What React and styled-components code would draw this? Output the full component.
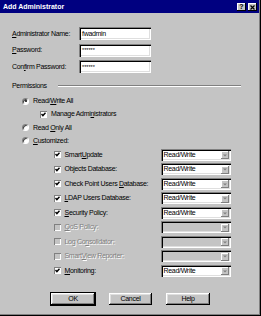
import React from 'react';
import styled, { createGlobalStyle } from 'styled-components';

const Global = createGlobalStyle`
  html, body { margin: 0; padding: 0; background: #c0c0c0; }
  body { font-family: "Liberation Sans", Arial, sans-serif; font-size: 7px; }
`;

const Window = styled.div`
  width: 261px;
  height: 316px;
  box-sizing: border-box;
  background: #c4c4c4;
  border-right: 1px solid #000;
  border-bottom: 1px solid #000;
  font-family: "Liberation Sans", Arial, sans-serif;
  font-size: 7px;
  letter-spacing: -0.3px;
  color: #000;
`;

const Frame = styled.div`
  height: 100%;
  box-sizing: border-box;
  border-right: 1px solid #808080;
  border-bottom: 1px solid #808080;
  display: flex;
  flex-direction: column;
`;

const TitleBar = styled.div`
  height: 13px;
  flex-shrink: 0;
  background: #000080;
  color: #fff;
  display: flex;
  align-items: center;
  padding: 0 2px 0 3px;
  font-weight: bold;
  letter-spacing: 0;
`;

const TitleText = styled.span`
  flex: 1;
  line-height: 13px;
`;

const TitleButtons = styled.div`
  display: flex;
  gap: 2px;
  margin-top: 1px;
`;

const TitleButton = styled.div`
  width: 9px;
  height: 8px;
  box-sizing: border-box;
  background: #c4c4c4;
  box-shadow: inset -1px -1px 0 #000, inset 1px 1px 0 #fff;
  display: flex;
  align-items: center;
  justify-content: center;
  color: #000;
  font-size: 7px;
  font-weight: bold;
  line-height: 8px;
`;

const Body = styled.div`
  display: flex;
  flex-direction: column;
  padding: 14px 18px 0 12px;
`;

const FieldGrid = styled.div`
  display: grid;
  grid-template-columns: 67px 72px;
  grid-auto-rows: 13px;
  row-gap: 3.5px;
  align-items: center;
`;

const TextBox = styled.div`
  height: 13px;
  box-sizing: border-box;
  background: #fff;
  box-shadow: inset 1px 1px 0 #808080, inset 2px 2px 0 #000,
    inset -1px -1px 0 #fff, inset -2px -2px 0 #dfdfdf;
  padding: 0 3px;
  display: flex;
  align-items: center;
  font-size: ${p => (p.$password ? '5.5px' : '7px')};
  letter-spacing: ${p => (p.$password ? '0' : '-0.3px')};
`;

const GroupHeader = styled.div`
  margin-top: 8.5px;
  height: 9px;
  display: flex;
  align-items: center;
`;

const GroupLine = styled.div`
  flex: 1;
  margin-left: 11px;
  border-top: 1px solid #808080;
  border-bottom: 1px solid #fff;
`;

const Options = styled.div`
  margin-top: 4px;
  display: flex;
  flex-direction: column;
`;

const OptionRow = styled.div`
  height: 13.25px;
  display: flex;
  align-items: center;
  gap: 4px;
  margin-left: ${p => p.$indent}px;
`;

const Radio = styled.span`
  width: 7px;
  height: 7px;
  box-sizing: border-box;
  border-radius: 50%;
  background: #fff;
  border: 1px solid;
  border-color: #808080 #fff #fff #808080;
  box-shadow: inset 1px 1px 0 #404040;
  display: flex;
  align-items: center;
  justify-content: center;
  flex-shrink: 0;
  &::after {
    content: '';
    width: 2px;
    height: 2px;
    border-radius: 50%;
    background: #000;
    display: ${p => (p.$checked ? 'block' : 'none')};
  }
`;

const Box = styled.span`
  width: 7px;
  height: 7px;
  box-sizing: border-box;
  background: ${p => (p.$disabled ? '#c4c4c4' : '#fff')};
  box-shadow: inset 1px 1px 0 #808080, inset -1px -1px 0 #fff;
  display: flex;
  align-items: center;
  justify-content: center;
  flex-shrink: 0;
`;

const Label = styled.span`
  white-space: nowrap;
  line-height: 8px;
  color: ${p => (p.$disabled ? '#808080' : '#000')};
  text-shadow: ${p => (p.$disabled ? '1px 1px 0 #fff' : 'none')};
`;

const Key = styled.span`
  text-decoration: underline;
`;

const SubList = styled.div`
  margin-left: 42px;
  display: grid;
  grid-template-columns: 106.5px 70px;
  grid-auto-rows: 14.5px;
  align-items: center;
`;

const SubCheck = styled.div`
  display: flex;
  align-items: center;
  gap: 3.5px;
`;

const Select = styled.div`
  height: 12px;
  box-sizing: border-box;
  background: ${p => (p.$disabled ? '#c4c4c4' : '#fff')};
  box-shadow: inset 1px 1px 0 #808080, inset 2px 2px 0 #000,
    inset -1px -1px 0 #fff, inset -2px -2px 0 #dfdfdf;
  display: flex;
  align-items: center;
  padding: 0 2px 0 3px;
`;

const SelectText = styled.span`
  flex: 1;
  line-height: 8px;
`;

const ArrowButton = styled.span`
  width: 8px;
  height: 8px;
  margin-top: 1px;
  box-sizing: border-box;
  background: #c4c4c4;
  box-shadow: inset -1px -1px 0 #808080, inset 1px 1px 0 #fff;
  display: flex;
  align-items: center;
  justify-content: center;
`;

const ButtonRow = styled.div`
  margin-top: 13.5px;
  display: flex;
  justify-content: center;
  gap: 12px;
  padding-left: 2px;
`;

const Button = styled.div`
  width: 45.5px;
  height: 14.5px;
  box-sizing: border-box;
  background: #c4c4c4;
  border: 1px solid ${p => (p.$default ? '#000' : 'transparent')};
  box-shadow: inset -1px -1px 0 #000, inset 1px 1px 0 #fff,
    inset -2px -2px 0 #808080, inset 2px 2px 0 #dfdfdf;
  display: flex;
  align-items: center;
  justify-content: center;
  line-height: 8px;
`;

const Check = () => (
  <svg width="5" height="5" viewBox="0 0 5 5">
    <path d="M0.5 2.1 L1.9 3.6 L4.5 0.8" stroke="#000" strokeWidth="1.4" fill="none" />
  </svg>
);

const Arrow = () => (
  <svg width="4" height="3" viewBox="0 0 4 3">
    <path d="M0 0.5 H4 L2 2.5 Z" fill="#808080" />
  </svg>
);

const CloseGlyph = () => (
  <svg width="5" height="5" viewBox="0 0 5 5">
    <path d="M0.5 0.5 L4.5 4.5 M4.5 0.5 L0.5 4.5" stroke="#000" strokeWidth="1.2" />
  </svg>
);

const subItems = [
  { pre: 'Smart', key: 'U', post: 'pdate', checked: true },
  { pre: '', key: '', post: 'Objects Database:', checked: true },
  { pre: 'Check Point Users ', key: 'D', post: 'atabase:', checked: true },
  { pre: '', key: 'L', post: 'DAP Users Database:', checked: true },
  { pre: '', key: 'S', post: 'ecurity Policy:', checked: true },
  { pre: '', key: 'Q', post: 'oS Policy:', disabled: true },
  { pre: 'Log Co', key: 'n', post: 'solidator:', disabled: true },
  { pre: 'Smart', key: 'V', post: 'iew Reporter:', disabled: true },
  { pre: '', key: 'M', post: 'onitoring:', checked: true },
];

export default function App() {
  return (
    <>
      <Global />
      <Window>
        <Frame>
          <TitleBar>
            <TitleText>Add Administrator</TitleText>
            <TitleButtons>
              <TitleButton>?</TitleButton>
              <TitleButton><CloseGlyph /></TitleButton>
            </TitleButtons>
          </TitleBar>
          <Body>
            <FieldGrid>
              <Label><Key>A</Key>dministrator Name:</Label>
              <TextBox>fwadmin</TextBox>
              <Label><Key>P</Key>assword:</Label>
              <TextBox $password>******</TextBox>
              <Label>Con<Key>f</Key>irm Password:</Label>
              <TextBox $password>******</TextBox>
            </FieldGrid>
            <GroupHeader>
              <Label>Permissions</Label>
              <GroupLine />
            </GroupHeader>
            <Options>
              <OptionRow $indent={10}>
                <Radio $checked />
                <Label>Read/<Key>W</Key>rite All</Label>
              </OptionRow>
              <OptionRow $indent={28}>
                <Box><Check /></Box>
                <Label>Manage Admi<Key>n</Key>istrators</Label>
              </OptionRow>
              <OptionRow $indent={10}>
                <Radio />
                <Label>Read <Key>O</Key>nly All</Label>
              </OptionRow>
              <OptionRow $indent={10}>
                <Radio />
                <Label><Key>C</Key>ustomized:</Label>
              </OptionRow>
            </Options>
            <SubList>
              {subItems.map((it, i) => (
                <React.Fragment key={i}>
                  <SubCheck>
                    <Box $disabled={it.disabled}>{it.checked && <Check />}</Box>
                    <Label $disabled={it.disabled}>
                      {it.pre}
                      {it.key && <Key>{it.key}</Key>}
                      {it.post}
                    </Label>
                  </SubCheck>
                  <Select $disabled={it.disabled}>
                    <SelectText>{it.disabled ? '' : 'Read/Write'}</SelectText>
                    <ArrowButton><Arrow /></ArrowButton>
                  </Select>
                </React.Fragment>
              ))}
            </SubList>
          </Body>
          <ButtonRow>
            <Button $default>OK</Button>
            <Button>Cancel</Button>
            <Button>Help</Button>
          </ButtonRow>
        </Frame>
      </Window>
    </>
  );
}
